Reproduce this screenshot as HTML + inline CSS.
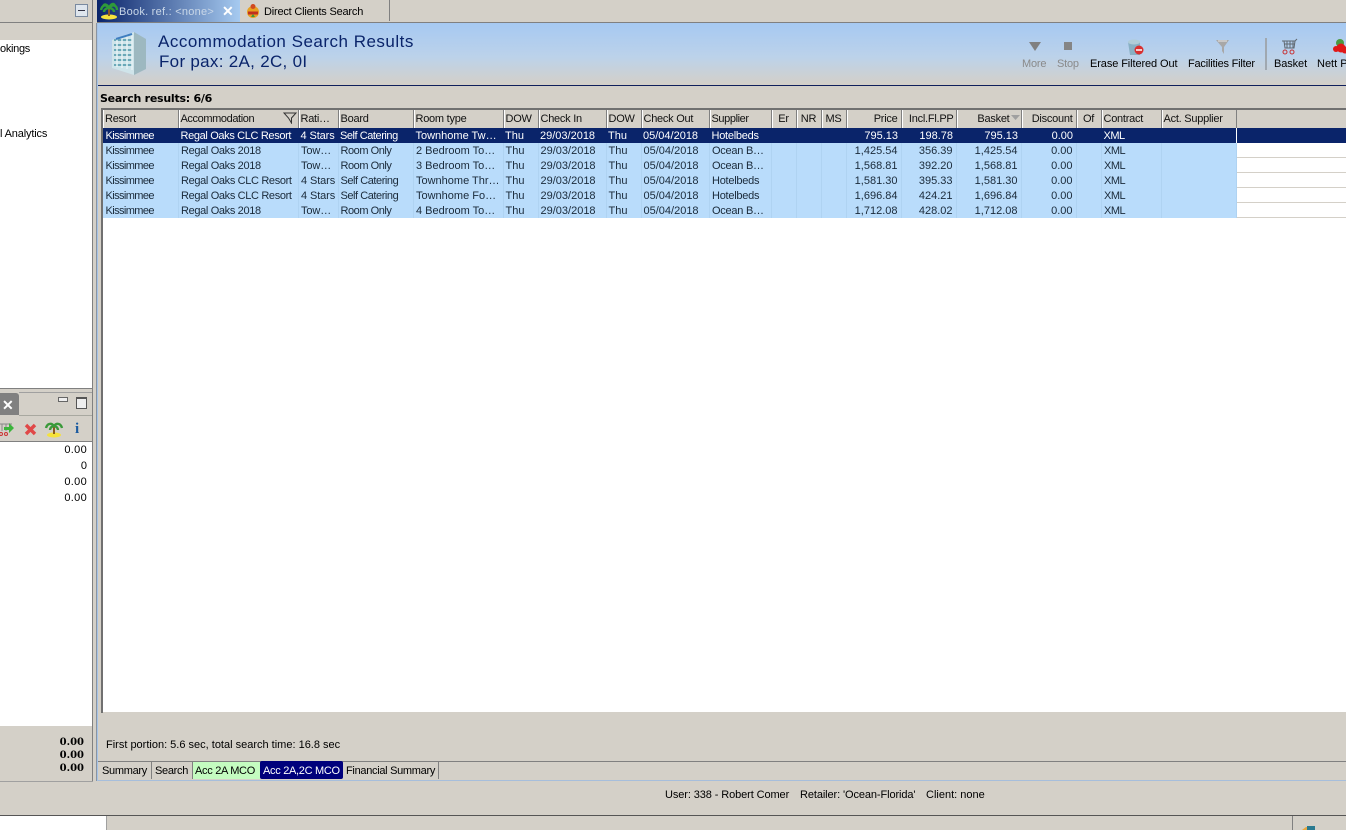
<!DOCTYPE html>
<html><head><meta charset="utf-8"><title>Accommodation Search Results</title>
<style>
html,body{margin:0;padding:0;width:1346px;height:830px;overflow:hidden;background:#d4d0c8}
body{position:relative;font:11px "Liberation Sans",sans-serif;color:#000}
.a{position:absolute;white-space:nowrap}
.grid{position:absolute;left:103px;top:110px;border-collapse:collapse;table-layout:fixed;width:1133px;font-size:11px}
.grid th{height:18px;padding:0 2px;font-weight:normal;text-align:left;background:#d4d0c8;border-right:1px solid #808080;box-shadow:inset 1px 0 0 #fff;box-sizing:border-box;white-space:nowrap;overflow:hidden;letter-spacing:-.25px;color:#111}
.grid td{height:15px;padding:0 2px;box-sizing:border-box;background:#b9dcfb;white-space:nowrap;overflow:hidden;color:#1a2a3a;border-right:1px solid #afd3f2}
.grid tr.s td{background:#0a246a;color:#fff;border-right:none}
.grid td:nth-child(1){letter-spacing:-.6px;padding-left:2.500px}
.grid td:nth-child(2){letter-spacing:-.35px;padding-left:2.500px}
.grid td:nth-child(3){padding-left:2.500px;letter-spacing:-.1px}
.grid td:nth-child(4){letter-spacing:-.45px}
.grid td:nth-child(5){padding-left:2.500px}
.grid td:nth-child(10){letter-spacing:-.25px;padding-left:2.500px}
.grid td:nth-child(19){letter-spacing:-.5px;padding-left:2.500px}
.r{text-align:right!important}.c{text-align:center!important}
.grid th.r,.grid td.r{padding-right:3px}
.tab{letter-spacing:-.3px}
</style></head><body>

<!-- top tab strip -->
<div class="a" style="left:0;top:0;width:93px;height:22px;border-bottom:1px solid #808080"></div>
<div class="a" style="left:75px;top:4px;width:11px;height:11px;border:1px solid #7a8aa0;background:#dfe6ee"></div>
<div class="a" style="left:78px;top:10px;width:7px;height:1px;background:#334"></div>
<div class="a" style="left:97px;top:0;width:143px;height:22px;background:linear-gradient(90deg,#0a246a,#a6caf0)"></div>
<div class="a" style="left:119px;top:6px;color:#c9d7e8;letter-spacing:.25px">Book. ref.: &lt;none&gt;</div>
<div class="a" style="left:222px;top:3px;color:#fff;font-size:14px;font-weight:bold">✕</div>
<div class="a" style="left:240px;top:0;width:149px;height:21px;border-right:1px solid #808080"></div>
<div class="a" style="left:264px;top:6px;letter-spacing:-.2px">Direct Clients Search</div>
<svg class="a" style="left:99px;top:1px" width="20" height="20"><ellipse cx="10" cy="16" rx="8" ry="2.500" fill="#f5e23c"/><path d="M10 15V7" stroke="#8a5a20" stroke-width="2"/><path d="M10 7C6 2 3 5 2 9M10 7c4-5 8-2 8 2M10 7c-2-4-5-5-6-1M10 7c2-5 5-5 6-2M10 7c-3 0-5 2-5 4M10 7c3 0 5 2 5 4" stroke="#2f9a3a" stroke-width="2.400" fill="none"/></svg>
<svg class="a" style="left:245px;top:3px" width="16" height="16"><circle cx="8" cy="9" r="6" fill="#e8a020"/><circle cx="8" cy="3.500" r="2.500" fill="#d04a20"/><path d="M3 10h10" stroke="#c03020" stroke-width="3"/><path d="M6 14l2-3 2 3" fill="#3a9a3a"/></svg>

<!-- left panel -->
<div class="a" style="left:0;top:40px;width:92px;height:348px;background:#fff"></div>
<div class="a" style="left:92px;top:0;width:1px;height:781px;background:#808080"></div>
<div class="a" style="left:0;top:22px;width:92px;height:1px;background:#808080"></div>
<div class="a" style="left:0;top:43px;letter-spacing:-.3px">okings</div>
<div class="a" style="left:0;top:128px;letter-spacing:-.15px">l Analytics</div>
<div class="a" style="left:0;top:388px;width:92px;height:1px;background:#808080"></div>
<div class="a" style="left:19px;top:392px;width:73px;height:1px;background:#a0a0a0"></div>

<div class="a" style="left:0;top:393px;width:19px;height:22px;background:#808080;border-top-right-radius:3px"></div>
<div class="a" style="left:2px;top:397px;color:#fff;font-size:14px;font-weight:bold">✕</div>
<div class="a" style="left:19px;top:415px;width:73px;height:1px;background:#a8a8a0"></div>
<div class="a" style="left:58px;top:397px;width:8px;height:3px;border:1px solid #666;background:#eee"></div>
<div class="a" style="left:76px;top:397px;width:9px;height:9px;border:1px solid #555;border-top-width:2px;background:#eee"></div>
<svg class="a" style="left:0;top:420px" width="92" height="20"><path d="M0 4h12M2 4v7M6 4v7M10 4v7" stroke="#888" fill="none"/><circle cx="1" cy="14" r="1.500" fill="none" stroke="#c33"/><circle cx="6" cy="14" r="1.500" fill="none" stroke="#c33"/><path d="M4 7h5V3l5 5-5 5V10H4z" fill="#3cb43c"/><path d="M26 5l9 9M35 5l-9 9" stroke="#e04848" stroke-width="3.400"/><ellipse cx="54" cy="15" rx="7" ry="2.500" fill="#f5e23c"/><path d="M54 14V6" stroke="#8a5a20" stroke-width="2"/><path d="M54 6c-3-4-7-2-8 2M54 6c3-4 7-2 8 2M54 6c-2 0-4 2-4 4M54 6c2 0 4 2 4 4" stroke="#3a9a3a" stroke-width="2.400" fill="none"/></svg>
<div class="a" style="left:75px;top:421px;color:#1a5aa0;font:bold 15px 'Liberation Serif',serif">i</div>
<div class="a" style="left:0;top:441px;width:92px;height:284px;background:#fff;border-top:1px solid #808080"></div>
<div class="a" style="right:1259px;top:444px;letter-spacing:.3px">0.00</div>
<div class="a" style="right:1259px;top:460px">0</div>
<div class="a" style="right:1259px;top:476px;letter-spacing:.3px">0.00</div>
<div class="a" style="right:1259px;top:492px;letter-spacing:.3px">0.00</div>
<div class="a" style="right:1262px;top:737px;font:bold 10px 'DejaVu Serif','Liberation Serif',serif">0.00</div>
<div class="a" style="right:1262px;top:750px;font:bold 10px 'DejaVu Serif','Liberation Serif',serif">0.00</div>
<div class="a" style="right:1262px;top:763px;font:bold 10px 'DejaVu Serif','Liberation Serif',serif">0.00</div>
<div class="a" style="left:0;top:781px;width:93px;height:1px;background:#a0a0a0"></div>

<!-- main panel -->
<div class="a" style="left:97px;top:22px;width:1249px;height:1px;background:#808080"></div>
<div class="a" style="left:96px;top:23px;width:1px;height:758px;background:#8b94a0"></div>
<div class="a" style="left:97px;top:23px;width:1px;height:758px;background:#a6c4e8"></div>
<div class="a" style="left:98px;top:23px;width:1248px;height:62px;background:linear-gradient(#a6c9f2,#bcd2ea 55%,#d4d0c8)"></div>
<div class="a" style="left:98px;top:85px;width:1248px;height:1px;background:#10205c"></div>
<svg class="a" style="left:108px;top:28px" width="40" height="50"><path d="M4 12 26 4v43L4 40z" fill="#cfe4ea"/><path d="M26 4l12 7v30l-12 6z" fill="#9db8c0"/><path d="M6 12h18M6 17h18M6 22h18M6 27h18M6 32h18M6 37h18" stroke="#6aa8b8" stroke-width="2"/><path d="M9 10v29M14 9v31M19 8v33M24 7v35" stroke="#e6f2f4" stroke-width="1.500"/><path d="M8 11l16-5" stroke="#3f7ec0" stroke-width="2"/></svg>
<div class="a" style="left:158px;top:32px;font-size:17px;color:#0a246a;letter-spacing:.5px">Accommodation Search Results</div>
<div class="a" style="left:159px;top:52px;font-size:17px;color:#0a246a;letter-spacing:.3px">For pax: 2A, 2C, 0I</div>

<!-- toolbar -->
<svg class="a" style="left:1028px;top:40px" width="14" height="14"><path d="M1 2h12L7 11z" fill="#808080"/></svg>
<div class="a" style="left:1064px;top:42px;width:8px;height:8px;background:#858585"></div>
<div class="a" style="left:1022px;top:58px;color:#8a8a8a;letter-spacing:-.2px">More</div>
<div class="a" style="left:1057px;top:58px;color:#8a8a8a;letter-spacing:-.2px">Stop</div>
<svg class="a" style="left:1128px;top:39px" width="18" height="17"><path d="M0 3h12v13H2z" fill="#88b0c4"/><ellipse cx="6" cy="3" rx="6" ry="2.500" fill="#b0ccd8"/><circle cx="11" cy="11" r="4.500" fill="#d83030"/><path d="M8 11h6" stroke="#fff" stroke-width="1.500"/></svg>
<div class="a" style="left:1090px;top:58px;letter-spacing:-.1px">Erase Filtered Out</div>
<svg class="a" style="left:1215px;top:39px" width="16" height="16"><path d="M1 1h13L9 8v7L7 12V8z" fill="#a8a8a8"/><path d="M3 2h9" stroke="#e8e8e8"/></svg>
<div class="a" style="left:1188px;top:58px;letter-spacing:-.2px">Facilities Filter</div>
<div class="a" style="left:1265px;top:38px;width:2px;height:32px;background:#a0a8b0"></div>
<svg class="a" style="left:1281px;top:38px" width="18" height="18"><path d="M1 3h13l2-2M3 3l1 7h9l1-7M6 3v7M9 3v7M12 3v7M3 6h11" stroke="#606870" fill="none"/><circle cx="4" cy="14" r="2" fill="none" stroke="#c83030"/><circle cx="11" cy="14" r="2" fill="none" stroke="#c83030"/></svg>
<div class="a" style="left:1274px;top:58px;letter-spacing:-.1px">Basket</div>
<svg class="a" style="left:1333px;top:38px" width="13" height="17"><circle cx="7" cy="5" r="4" fill="#4a9a40"/><circle cx="8" cy="10" r="4.500" fill="#e01818"/><circle cx="3" cy="11" r="3" fill="#e01818"/><circle cx="12" cy="12" r="3.500" fill="#e01818"/></svg>
<div class="a" style="left:1317px;top:58px">Nett P</div>

<div class="a" style="left:100px;top:92px;font:bold 11px 'DejaVu Sans',sans-serif;letter-spacing:-.25px">Search results: 6/6</div>

<!-- results grid -->
<div class="a" style="left:101px;top:108px;width:1245px;height:605px;background:#fff;border-top:2px solid #707070;border-left:2px solid #707070;box-sizing:border-box"></div>
<div class="a" style="left:103px;top:110px;width:1243px;height:18px;background:#d4d0c8"></div>
<div class="a" style="left:1237px;top:157px;width:109px;height:1px;background:#d4d0c8"></div>
<div class="a" style="left:1237px;top:172px;width:109px;height:1px;background:#d4d0c8"></div>
<div class="a" style="left:1237px;top:187px;width:109px;height:1px;background:#d4d0c8"></div>
<div class="a" style="left:1237px;top:202px;width:109px;height:1px;background:#d4d0c8"></div>
<div class="a" style="left:1237px;top:217px;width:109px;height:1px;background:#d4d0c8"></div>
<div class="a" style="left:1237px;top:128px;width:109px;height:15px;background:#0a246a"></div>
<table class="grid">
<colgroup><col style="width:75px"><col style="width:120px"><col style="width:40px"><col style="width:75px"><col style="width:90px"><col style="width:35px"><col style="width:68px"><col style="width:35px"><col style="width:68px"><col style="width:62px"><col style="width:25px"><col style="width:25px"><col style="width:25px"><col style="width:55px"><col style="width:55px"><col style="width:65px"><col style="width:55px"><col style="width:25px"><col style="width:60px"><col style="width:75px"></colgroup>
<tr><th>Resort</th><th style="letter-spacing:-.4px">Accommodation</th><th>Rati…</th><th>Board</th><th>Room type</th><th>DOW</th><th>Check In</th><th>DOW</th><th>Check Out</th><th style="letter-spacing:-.4px">Supplier</th><th class="c">Er</th><th class="c">NR</th><th class="c">MS</th><th class="r">Price</th><th class="r" style="padding-right:2px">Incl.Fl.PP</th><th class="r" style="padding-right:11px">Basket</th><th class="r">Discount</th><th class="c">Of</th><th>Contract</th><th>Act. Supplier</th></tr>
<tr class="s"><td>Kissimmee</td><td>Regal Oaks CLC Resort</td><td>4 Stars</td><td>Self Catering</td><td>Townhome Tw…</td><td>Thu</td><td>29/03/2018</td><td>Thu</td><td>05/04/2018</td><td>Hotelbeds</td><td></td><td></td><td></td><td class="r">795.13</td><td class="r">198.78</td><td class="r">795.13</td><td class="r">0.00</td><td></td><td>XML</td><td></td></tr>
<tr><td>Kissimmee</td><td>Regal Oaks 2018</td><td>Tow…</td><td>Room Only</td><td>2 Bedroom To…</td><td>Thu</td><td>29/03/2018</td><td>Thu</td><td>05/04/2018</td><td>Ocean B…</td><td></td><td></td><td></td><td class="r">1,425.54</td><td class="r">356.39</td><td class="r">1,425.54</td><td class="r">0.00</td><td></td><td>XML</td><td></td></tr>
<tr><td>Kissimmee</td><td>Regal Oaks 2018</td><td>Tow…</td><td>Room Only</td><td>3 Bedroom To…</td><td>Thu</td><td>29/03/2018</td><td>Thu</td><td>05/04/2018</td><td>Ocean B…</td><td></td><td></td><td></td><td class="r">1,568.81</td><td class="r">392.20</td><td class="r">1,568.81</td><td class="r">0.00</td><td></td><td>XML</td><td></td></tr>
<tr><td>Kissimmee</td><td>Regal Oaks CLC Resort</td><td>4 Stars</td><td>Self Catering</td><td>Townhome Thr…</td><td>Thu</td><td>29/03/2018</td><td>Thu</td><td>05/04/2018</td><td>Hotelbeds</td><td></td><td></td><td></td><td class="r">1,581.30</td><td class="r">395.33</td><td class="r">1,581.30</td><td class="r">0.00</td><td></td><td>XML</td><td></td></tr>
<tr><td>Kissimmee</td><td>Regal Oaks CLC Resort</td><td>4 Stars</td><td>Self Catering</td><td>Townhome Fo…</td><td>Thu</td><td>29/03/2018</td><td>Thu</td><td>05/04/2018</td><td>Hotelbeds</td><td></td><td></td><td></td><td class="r">1,696.84</td><td class="r">424.21</td><td class="r">1,696.84</td><td class="r">0.00</td><td></td><td>XML</td><td></td></tr>
<tr><td>Kissimmee</td><td>Regal Oaks 2018</td><td>Tow…</td><td>Room Only</td><td>4 Bedroom To…</td><td>Thu</td><td>29/03/2018</td><td>Thu</td><td>05/04/2018</td><td>Ocean B…</td><td></td><td></td><td></td><td class="r">1,712.08</td><td class="r">428.02</td><td class="r">1,712.08</td><td class="r">0.00</td><td></td><td>XML</td><td></td></tr>
</table>
<svg class="a" style="left:283px;top:112px" width="14" height="12"><path d="M1 1h12L8.500 6v5L5.500 6z" fill="none" stroke="#333"/></svg>
<svg class="a" style="left:1011px;top:115px" width="9" height="6"><path d="M0 0h9L4.500 5z" fill="#a0a0a0"/></svg>

<!-- footer -->
<div class="a" style="left:103px;top:712px;width:1243px;height:1px;background:#d4d0c8"></div>
<div class="a" style="left:106px;top:739px">First portion: 5.6 sec, total search time: 16.8 sec</div>
<div class="a" style="left:98px;top:761px;width:1248px;height:1px;background:#808080"></div>
<div class="a" style="left:98px;top:780px;width:1248px;height:1px;background:#a6bedc"></div>
<div class="a tab" style="left:102px;top:765px">Summary</div>
<div class="a" style="left:151px;top:762px;width:1px;height:17px;background:#808080"></div>
<div class="a tab" style="left:155px;top:765px">Search</div>
<div class="a" style="left:192px;top:762px;width:68px;height:17px;background:#c4fcc0;border-left:1px solid #808080;box-sizing:border-box"></div>
<div class="a tab" style="left:195px;top:765px">Acc 2A MCO</div>
<div class="a" style="left:260px;top:761px;width:83px;height:18px;background:#00007c;border-radius:2px"></div>
<div class="a tab" style="left:263px;top:765px;color:#fff">Acc 2A,2C MCO</div>
<div class="a tab" style="left:346px;top:765px">Financial Summary</div>
<div class="a" style="left:438px;top:762px;width:1px;height:17px;background:#808080"></div>

<!-- status -->
<div class="a" style="left:665px;top:789px;letter-spacing:-.1px">User: 338 - Robert Comer</div>
<div class="a" style="left:800px;top:789px;letter-spacing:-.1px">Retailer: 'Ocean-Florida'</div>
<div class="a" style="left:926px;top:789px">Client: none</div>
<div class="a" style="left:0;top:815px;width:1346px;height:1px;background:#555"></div>
<div class="a" style="left:0;top:816px;width:106px;height:14px;background:#fff"></div>
<div class="a" style="left:106px;top:816px;width:1px;height:14px;background:#a0a0a0"></div>
<div class="a" style="left:1292px;top:816px;width:1px;height:14px;background:#808080"></div>
<svg class="a" style="left:1300px;top:824px" width="18" height="6"><path d="M2 6l4-3h2v3z" fill="#e8a840"/><path d="M7 2h8v4H7z" fill="#2a7a90"/></svg>
</body></html>
